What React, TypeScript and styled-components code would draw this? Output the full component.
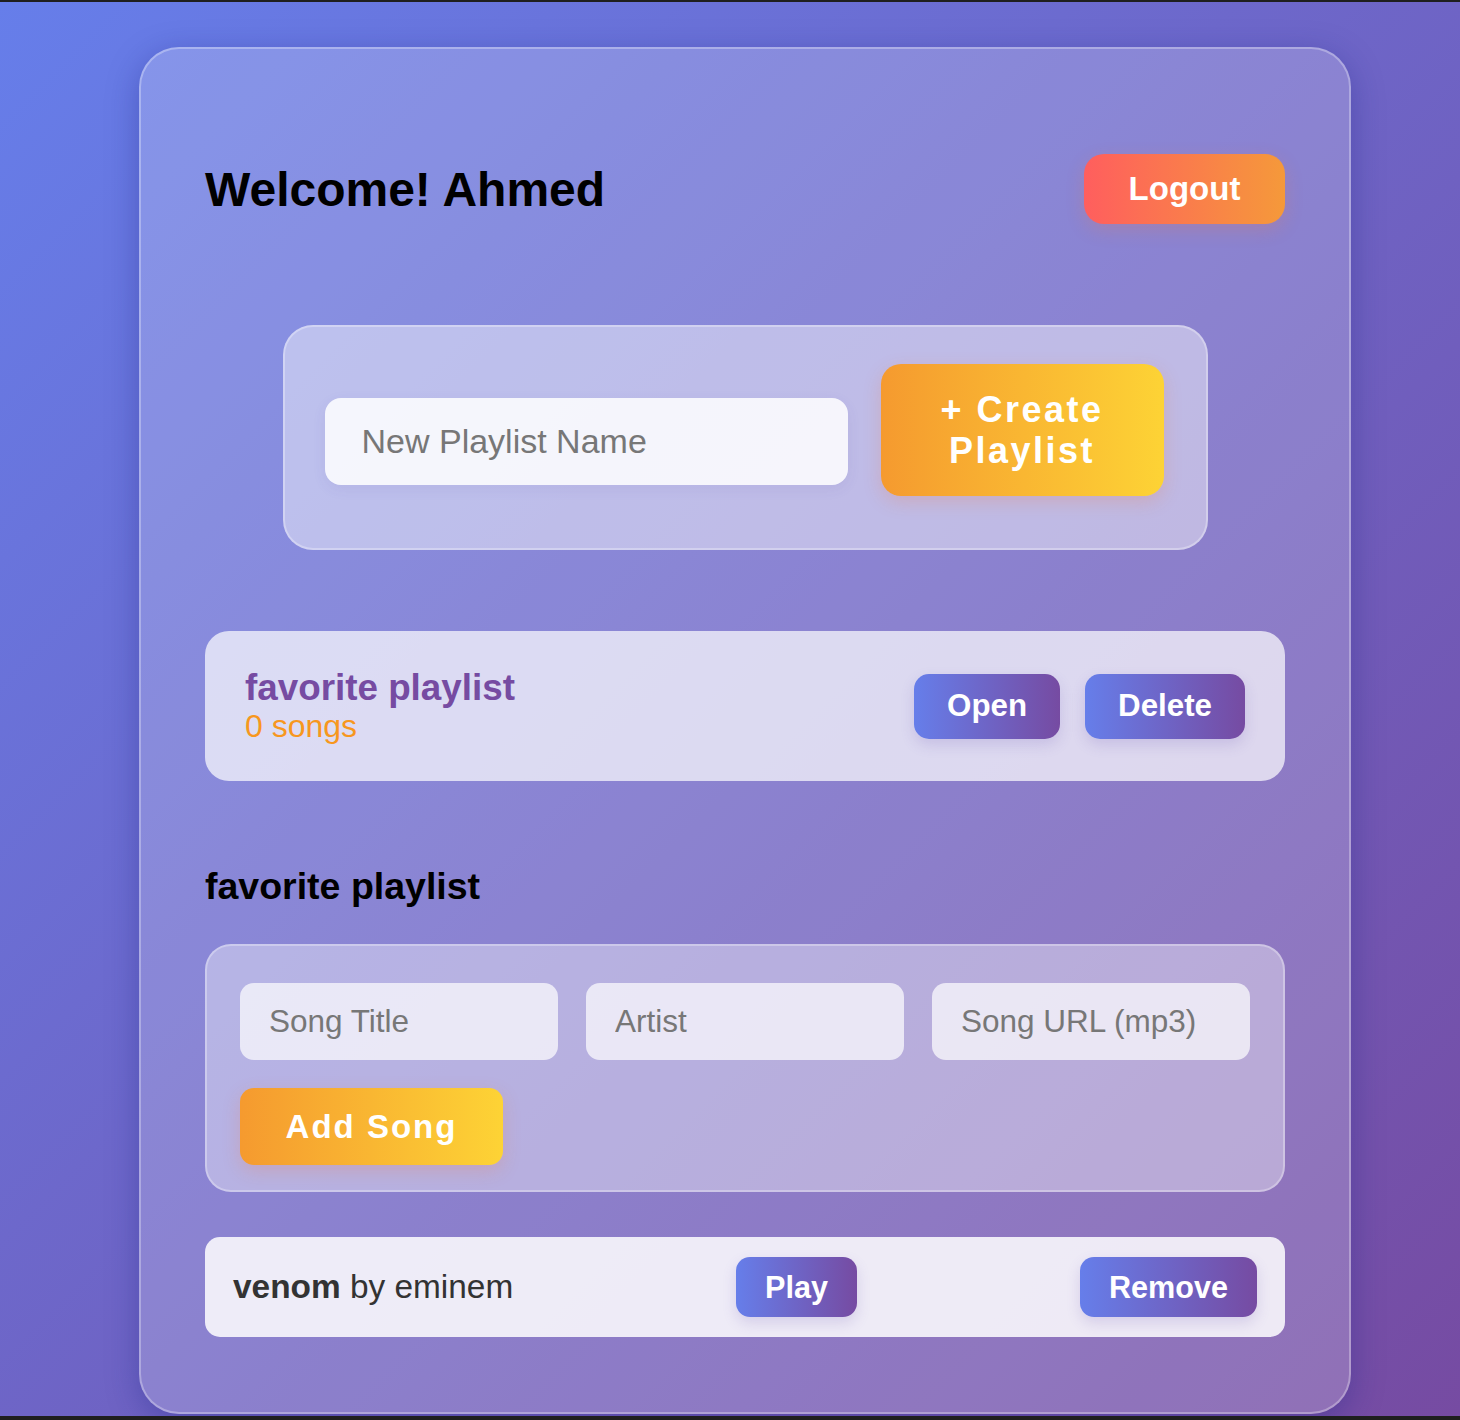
import * as React from 'react'
import styled, { createGlobalStyle } from 'styled-components'

const GlobalStyle = createGlobalStyle`
  html, body {
    margin: 0;
    padding: 0;
    background: #1f1f1f;
  }
  * {
    box-sizing: border-box;
  }
  body {
    font-family: 'Liberation Sans', Arial, sans-serif;
  }
  input::placeholder {
    color: #777;
  }
`

const Page = styled.div`
  margin-top: 2px;
  height: 1414px;
  overflow: hidden;
  padding: 45px 0 0 139px;
  background: linear-gradient(135deg, #667eea 0%, #764ba2 100%);
`

const Card = styled.div`
  width: 1212px;
  padding: 64px 64px 75px;
  border-radius: 40px;
  background: rgba(255, 255, 255, 0.2);
  border: 2px solid rgba(255, 255, 255, 0.3);
  box-shadow: 0 8px 32px rgba(31, 38, 135, 0.37);
`

const Header = styled.header`
  display: flex;
  align-items: center;
  justify-content: space-between;
  padding-top: 41px;
  height: 111px;
`

const Welcome = styled.h1`
  margin: 0;
  font-size: 48px;
  font-weight: bold;
  color: #000;
`

const GradientButton = styled.button<{ $tone: 'sunset' | 'sun' | 'violet' }>`
  border: none;
  cursor: pointer;
  color: #fff;
  font-family: inherit;
  font-weight: bold;
  background: ${p =>
    p.$tone === 'sunset'
      ? 'linear-gradient(90deg, #ff5e5e, #f5993a)'
      : p.$tone === 'sun'
      ? 'linear-gradient(90deg, #f59a2f, #fdd335)'
      : 'linear-gradient(90deg, #667eea, #764ba2)'};
  box-shadow: ${p =>
    p.$tone === 'violet'
      ? '0 6px 14px rgba(102, 80, 180, 0.18)'
      : '0 6px 18px rgba(247, 120, 60, 0.22)'};
`

const LogoutButton = styled(GradientButton)`
  width: 201px;
  height: 70px;
  border-radius: 20px;
  font-size: 33px;
`

const CreateBox = styled.form`
  width: 925px;
  margin: 101px auto 0;
  display: flex;
  align-items: flex-start;
  gap: 33px;
  padding: 37px 42px 52px 40px;
  border-radius: 30px;
  background: rgba(255, 255, 255, 0.45);
  border: 2px solid rgba(255, 255, 255, 0.3);
`

const NameInput = styled.input`
  flex: 1;
  min-width: 0;
  height: 87px;
  margin-top: 34px;
  padding: 0 37px;
  border: none;
  border-radius: 16px;
  background: rgba(255, 255, 255, 0.85);
  font-family: inherit;
  font-size: 34px;
  box-shadow: 0 4px 14px rgba(80, 70, 160, 0.08);
  outline: none;
`

const CreateButton = styled(GradientButton)`
  width: 283px;
  flex-shrink: 0;
  padding: 25px 40px;
  border-radius: 20px;
  font-size: 36px;
  line-height: 41px;
  letter-spacing: 2.5px;
  text-align: center;
`

const PlaylistCard = styled.div`
  margin-top: 81px;
  height: 150px;
  display: flex;
  align-items: center;
  justify-content: space-between;
  padding: 0 40px;
  border-radius: 24px;
  background: rgba(255, 255, 255, 0.7);
`

const PlaylistInfo = styled.div`
  display: flex;
  flex-direction: column;
`

const PlaylistName = styled.span`
  font-size: 36.8px;
  line-height: 40px;
  font-weight: bold;
  color: #764ba2;
`

const SongCount = styled.span`
  font-size: 32px;
  line-height: 37px;
  color: #f7971e;
`

const Actions = styled.div`
  display: flex;
  gap: 25px;
`

const SmallButton = styled(GradientButton)`
  height: 65px;
  padding: 0 33px;
  border-radius: 15px;
  font-size: 31.3px;
`

const SectionTitle = styled.h3`
  margin: 84px 0 0;
  font-size: 37.5px;
  line-height: 42px;
  font-weight: bold;
  color: #000;
`

const SongForm = styled.form`
  margin-top: 37px;
  padding: 37px 33px 25px;
  border-radius: 26px;
  background: rgba(255, 255, 255, 0.38);
  border: 2px solid rgba(255, 255, 255, 0.3);
  display: flex;
  flex-direction: column;
  gap: 28px;
`

const FieldRow = styled.div`
  display: grid;
  grid-template-columns: repeat(3, 1fr);
  gap: 28px;
`

const FieldInput = styled.input`
  height: 77px;
  padding: 0 29px;
  border: none;
  border-radius: 14px;
  background: rgba(255, 255, 255, 0.7);
  font-family: inherit;
  font-size: 31.5px;
  outline: none;
  min-width: 0;
`

const AddButton = styled(GradientButton)`
  align-self: flex-start;
  width: 263px;
  height: 77px;
  border-radius: 14px;
  font-size: 33px;
  letter-spacing: 2px;
`

const SongItem = styled.div`
  margin-top: 45px;
  height: 100px;
  display: flex;
  align-items: center;
  justify-content: space-between;
  padding: 0 28px;
  border-radius: 15px;
  background: rgba(255, 255, 255, 0.85);
  font-size: 33.4px;
  color: #333;
`

const SongButton = styled(GradientButton)`
  height: 60px;
  padding: 0 29px;
  border-radius: 14px;
  font-size: 30.6px;
`

export default function App() {
  return (
    <>
      <GlobalStyle />
      <Page>
        <Card>
          <Header>
            <Welcome>Welcome! Ahmed</Welcome>
            <LogoutButton $tone="sunset">Logout</LogoutButton>
          </Header>

          <CreateBox onSubmit={e => e.preventDefault()}>
            <NameInput placeholder="New Playlist Name" />
            <CreateButton $tone="sun">+ Create Playlist</CreateButton>
          </CreateBox>

          <PlaylistCard>
            <PlaylistInfo>
              <PlaylistName>favorite playlist</PlaylistName>
              <SongCount>0 songs</SongCount>
            </PlaylistInfo>
            <Actions>
              <SmallButton $tone="violet">Open</SmallButton>
              <SmallButton $tone="violet">Delete</SmallButton>
            </Actions>
          </PlaylistCard>

          <SectionTitle>favorite playlist</SectionTitle>

          <SongForm onSubmit={e => e.preventDefault()}>
            <FieldRow>
              <FieldInput placeholder="Song Title" />
              <FieldInput placeholder="Artist" />
              <FieldInput placeholder="Song URL (mp3)" />
            </FieldRow>
            <AddButton $tone="sun">Add Song</AddButton>
          </SongForm>

          <SongItem>
            <span>
              <strong>venom</strong> by eminem
            </span>
            <SongButton $tone="violet">Play</SongButton>
            <SongButton $tone="violet">Remove</SongButton>
          </SongItem>
        </Card>
      </Page>
    </>
  )
}
